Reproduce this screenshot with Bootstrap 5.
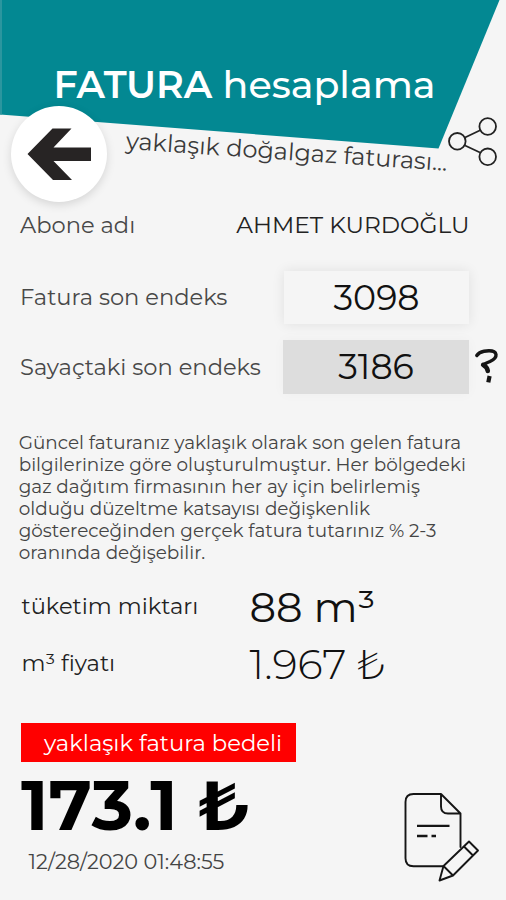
<!DOCTYPE html>
<html lang="tr">
<head>
<meta charset="utf-8">
<meta name="viewport" content="width=device-width, initial-scale=1">
<title>Fatura hesaplama</title>
<link href="https://cdn.jsdelivr.net/npm/bootstrap@5.3.0/dist/css/bootstrap.min.css" rel="stylesheet">
<style>
  body { background: #f5f5f5; font-family: Montserrat, Inter, sans-serif; color: #222; }
  .screen { width: 506px; height: 900px; white-space: nowrap; }
  .hero { height: 205px; }
  .hero-shape { left: 0; top: 0; }
  .hero-title { font-size: 38px; line-height: 47px; padding: 61px 0 0 53.5px; font-weight: 500; }
  .hero-title strong { font-weight: 600; }
  .tagline { font-size: 24px; line-height: 26px; color: #3a3a3a; left: 126px; top: 127.5px; transform: rotate(3.9deg); transform-origin: 0 50%; }
  .back { left: 11px; top: 105.5px; width: 96px; height: 96px; box-shadow: 0 3px 10px rgba(0,0,0,.13); }
  .share { left: 444px; top: 112px; }
  .field { padding-left: 20px; }
  .field-label { font-size: 22.6px; color: #484848; padding-top: 2px; }
  .field-label.low { padding-top: 1px; }
  .owner { height: 41px; padding-right: 36.5px; }
  .owner-name { font-size: 23.3px; }
  .index-row { height: 54px; }
  .index-box { width: 185px; height: 53px; font-size: 34.8px; padding-top: 2px; color: #111; background: #f5f5f5; box-shadow: 0 0 12px rgba(0,0,0,.09); }
  .index-box.current { width: 186px; height: 54px; background: #ddd; box-shadow: 0 0 12px rgba(0,0,0,.03); padding-top: 1px; }
  .help { margin: 0 7px 0 4px; }
  .note { margin-top: 38px; padding-left: 18.7px; font-size: 18.4px; line-height: 22.1px; color: #444; }
  .totals { margin-top: 14px; padding-left: 21.5px; }
  .total-row { height: 57px; }
  .total-label { width: 228px; font-size: 22.6px; }
  .total-value { font-size: 41.6px; line-height: 57px; color: #111; }
  .total-value.thin { font-weight: 300; }
  .due-tag { margin: 30px 0 0 21px; width: 275px; height: 39px; background: #f00; color: #fff; font-size: 22.7px; padding: 1px 0 0 23px; }
  .due { padding-left: 21px; }
  .due-amount { font-size: 70.1px; line-height: 68px; font-weight: 700; margin-top: 9.5px; color: #000; }
  .due-time { font-size: 20.8px; line-height: 40px; padding-left: 7.5px; margin-top: 2.5px; color: #444; }
  .edit { margin: 26px 24px 0 0; }
</style>
<script src="https://cdn.jsdelivr.net/npm/bootstrap@5.3.0/dist/js/bootstrap.bundle.min.js"></script>
</head>
<body>
<main class="screen overflow-hidden d-flex flex-column">
  <header class="hero position-relative flex-shrink-0">
    <svg class="hero-shape position-absolute" width="506" height="150" aria-hidden="true"><path d="M0 0H499.500L438.500 148.500L0 114.500Z" fill="#038892"/><path d="M0 0H2V114.600L0 114.500Z" fill="#2b969f"/></svg>
    <h1 class="hero-title position-relative text-white m-0"><strong>FATURA</strong> hesaplama</h1>
    <div class="tagline position-absolute">yaklaşık doğalgaz faturası...</div>
    <a href="#" class="back position-absolute bg-white rounded-circle d-flex" aria-label="Geri">
      <svg width="96" height="96" viewBox="11 105.500 96 96"><path d="M27.500 153.500L52.500 128H71.500L53.500 147H91V160.500H53.500L72 179.500H53Z" fill="#272424"/></svg>
    </a>
    <a href="#" class="share position-absolute" aria-label="Paylaş">
      <svg width="58" height="58" viewBox="444 112 58 58" fill="none" stroke="#222" stroke-width="1.800"><circle cx="457.300" cy="141.300" r="8.300"/><circle cx="487.700" cy="126.500" r="8.300"/><circle cx="487.700" cy="156.800" r="8.300"/><path d="M465 137.500L480.200 130.200M465 145.500L480 152.500"/></svg>
    </a>
  </header>

  <section class="field owner d-flex align-items-center justify-content-between">
    <span class="field-label low">Abone adı</span><span class="owner-name">AHMET KURDOĞLU</span>
  </section>
  <section class="field index-row d-flex align-items-center mt-4">
    <label class="field-label flex-grow-1">Fatura son endeks</label>
    <div class="index-box d-flex align-items-center justify-content-center">3098</div>
    <div class="help"><svg width="26" height="1"></svg></div>
  </section>
  <section class="field index-row d-flex align-items-center mt-3">
    <label class="field-label low flex-grow-1">Sayaçtaki son endeks</label>
    <div class="index-box current d-flex align-items-center justify-content-center">3186</div>
    <a href="#" class="help d-flex" aria-label="Yardım"><svg width="26" height="40" viewBox="473 347 26 40" fill="none" stroke="#151515" stroke-linecap="round" stroke-linejoin="round"><path d="M476.800 355.500Q479 352 484 351.200Q495 349.500 496 354.500Q496.500 358.500 490 361.500Q484 364 483 365" stroke-width="3.400"/><path d="M483.200 364.800Q487.500 367.500 487.800 371" stroke-width="4.600"/><path d="M489.600 376L488.300 382.300" stroke-width="4.200" stroke-linecap="butt"/></svg></a>
  </section>

  <p class="note mb-0">Güncel faturanız yaklaşık olarak son gelen fatura<br>bilgilerinize göre oluşturulmuştur. Her bölgedeki<br>gaz dağıtım firmasının her ay için belirlemiş<br>olduğu düzeltme katsayısı değişkenlik<br>göstereceğinden gerçek fatura tutarınız % 2-3<br>oranında değişebilir.</p>

  <section class="totals">
    <div class="total-row d-flex align-items-center"><span class="total-label">tüketim miktarı</span><span class="total-value">88 m³</span></div>
    <div class="total-row d-flex align-items-center"><span class="total-label">m³ fiyatı</span><span class="total-value thin">1.967 ₺</span></div>
  </section>

  <div class="due-tag d-flex align-items-center flex-shrink-0">yaklaşık fatura bedeli</div>
  <section class="due d-flex justify-content-between align-items-start">
    <div>
      <div class="due-amount">173.1 ₺</div>
      <div class="due-time">12/28/2020 01:48:55</div>
    </div>
    <a href="#" class="edit d-flex" aria-label="Düzenle">
      <svg width="80" height="98" viewBox="402 788 80 98" fill="none" stroke="#151515" stroke-width="1.900" stroke-linejoin="round" stroke-linecap="round"><path d="M443.500 866.300H413.500Q405.500 866.300 405.500 858.300V802Q405.500 794 413.500 794H441L460.500 813.500V847M441 794V806.500Q441 813.500 448 813.500H460.500"/><path d="M417 825.800H449.500M417 836H427.500M431.500 836H436" stroke-width="2.300" stroke-linecap="butt"/><path d="M439.500 880.500L443.500 866L469 841.500L478 850.500L453 875.500ZM443.500 866L453 875.500M464 846.500L473 855.500"/></svg>
    </a>
  </section>
</main>
</body>
</html>
